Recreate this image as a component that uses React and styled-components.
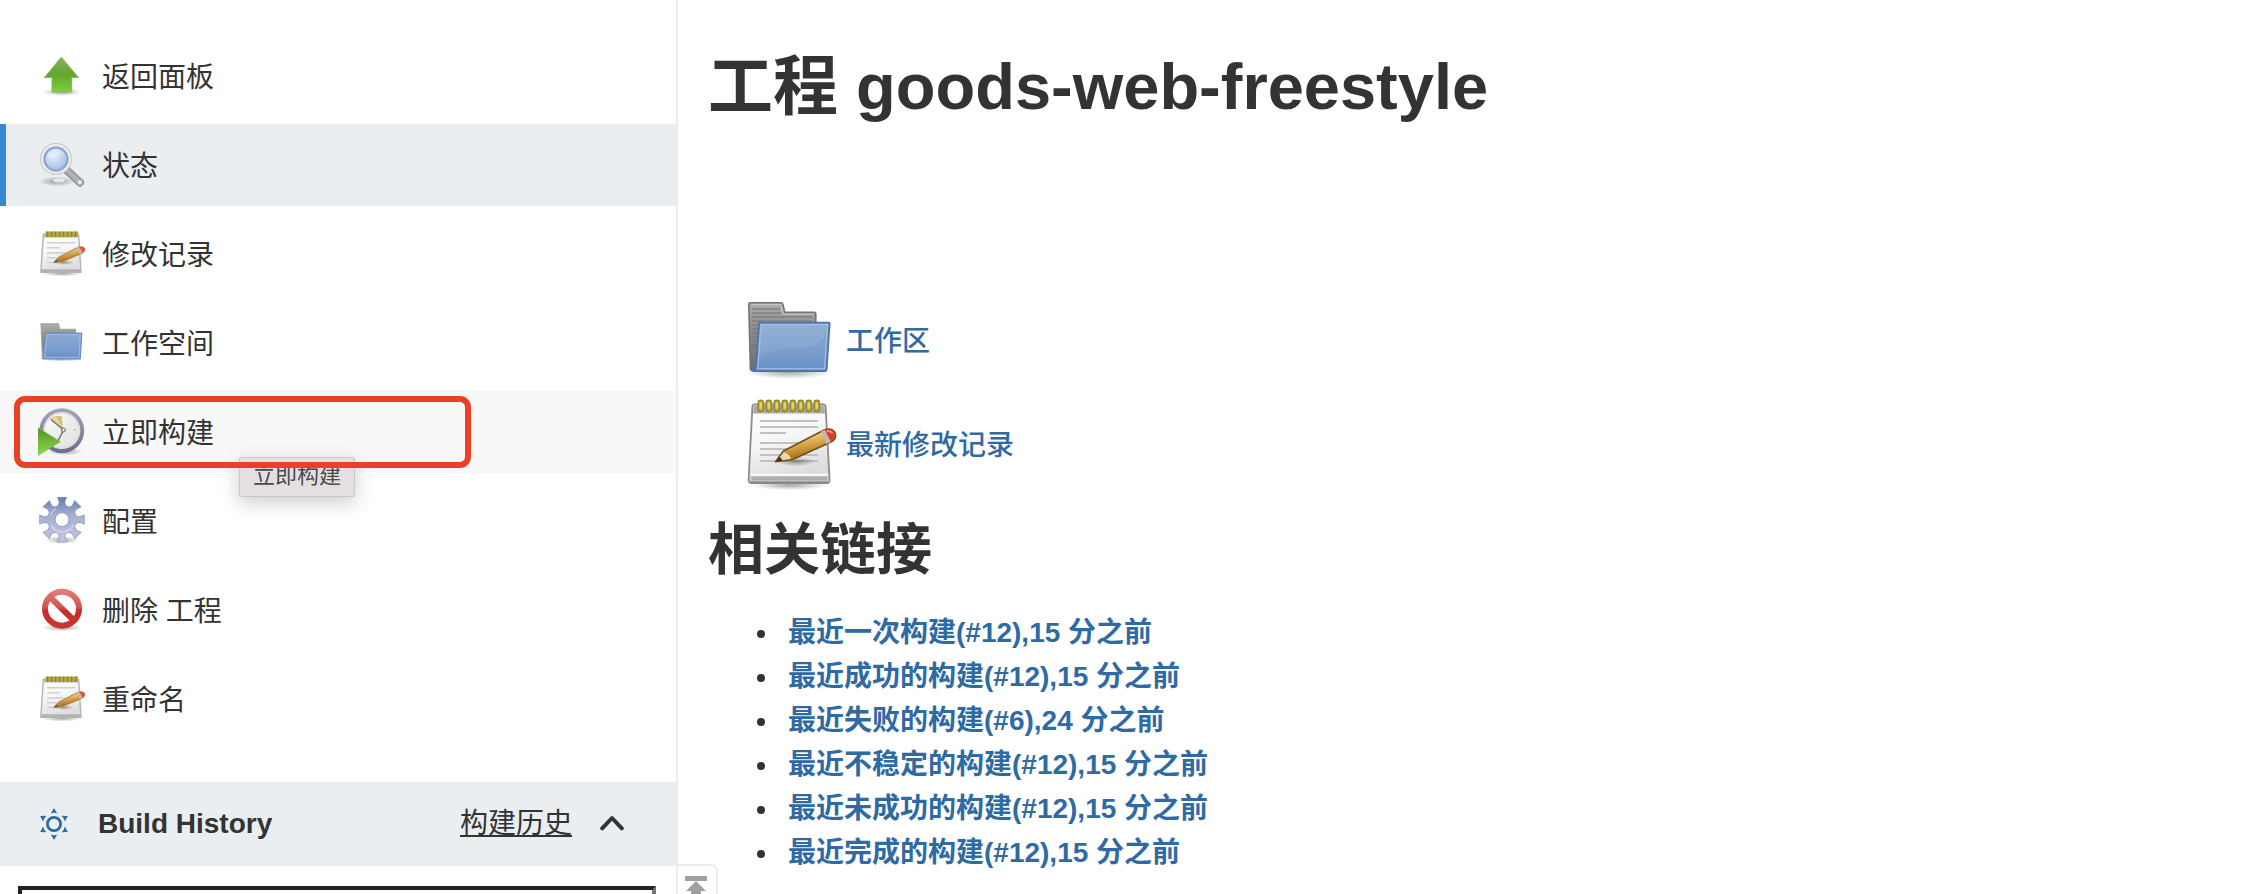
import React from "react";
import styled, { createGlobalStyle, css } from "styled-components";

const colors = {
  text: "#333333",
  link: "#2f6aa3",
  band: "#eaeef1",
  hover: "#f8f8f8",
  accent: "#3b86d3",
  marker: "#eb4025",
};

const GlobalStyle = createGlobalStyle`
  *, *::before, *::after { box-sizing: border-box; }
  body {
    margin: 0;
    background: #ffffff;
    color: ${colors.text};
    font-family: "Liberation Sans", "Noto Sans CJK SC", sans-serif;
    font-size: 28px;
    line-height: 44px;
  }
`;

const Shell = styled.div`
  display: flex;
  height: 100vh;
  overflow: hidden;
`;

const Sidebar = styled.aside`
  flex: none;
  width: 30%;
  display: flex;
  flex-direction: column;
  padding-top: 35px;
  border-right: 2px solid ${colors.band};
`;

const TaskList = styled.nav`
  display: flex;
  flex-direction: column;
  gap: 7px;
  margin-bottom: 42px;
`;

const TaskItem = styled.div`
  position: relative;
`;

const TaskLink = styled.a`
  display: flex;
  align-items: center;
  gap: 16px;
  height: 82px;
  padding-left: 38px;
  color: inherit;
  text-decoration: none;
  ${(p) => p.$state === "active" && css`
    background: ${colors.band};
    box-shadow: inset 6px 0 0 ${colors.accent};
  `}
  ${(p) => p.$state === "hover" && css`
    background: ${colors.hover};
  `}
`;

const Label = styled.span`
  padding-top: 3px;
`;

const Marker = styled.span`
  position: absolute;
  z-index: 2;
  top: 5px;
  left: 14px;
  width: 457px;
  height: 72px;
  border: 6px solid ${colors.marker};
  border-radius: 11px;
  pointer-events: none;
`;

const Tooltip = styled.span`
  position: absolute;
  z-index: 1;
  top: 66px;
  left: 239px;
  height: 40px;
  padding: 0 13px;
  border: 1px solid #cbc8ca;
  border-radius: 2px;
  background: #e4e0e2;
  box-shadow: 0 6px 20px rgba(0, 0, 0, 0.2);
  color: #4a4a4a;
  font-size: 22px;
  line-height: 36px;
`;

const HistoryBar = styled.section`
  display: flex;
  align-items: center;
  flex: none;
  height: 84px;
  padding: 0 52px 0 38px;
  background: ${colors.band};
`;

const HistoryTitle = styled.h2`
  margin: 0 auto 0 28px;
  font-size: 28px;
  line-height: 44px;
`;

const TrendLink = styled.a`
  display: flex;
  align-items: center;
  gap: 28px;
  color: inherit;
  text-underline-offset: 2px;
  text-decoration-thickness: 2px;
`;

const Filter = styled.input`
  flex: none;
  height: 64px;
  margin: 20px 20px 0 18px;
  padding: 0 12px;
  border: 4px solid;
  border-color: #222222 #767676 #767676 #222222;
  background: #ffffff;
  font: inherit;
  outline: none;
`;

const PaneToggle = styled.button`
  flex: none;
  align-self: flex-end;
  display: flex;
  justify-content: center;
  width: 40px;
  height: 30px;
  padding: 10px 2px 0 0;
  overflow: hidden;
  border: 2px solid ${colors.band};
  border-width: 2px 2px 0 0;
  border-radius: 0 8px 0 0;
  background: #ffffff;
`;

const Main = styled.main`
  flex: 1;
  min-width: 0;
  margin-left: -10px;
  padding-top: 43px;
`;

const Title = styled.h1`
  margin: 0 0 161px;
  font-size: 65px;
  line-height: 88px;
`;

const Shortcuts = styled.div`
  display: flex;
  flex-direction: column;
  align-items: flex-start;
  gap: 8px;
  padding-left: 34px;
`;

const Shortcut = styled.a`
  display: flex;
  align-items: center;
  gap: 8px;
  color: ${colors.link};
  font-weight: 500;
  text-decoration: none;
`;

const Subtitle = styled.h2`
  margin: 20px 0 23px;
  font-size: 56px;
  line-height: 76px;
`;

const BuildList = styled.ul`
  margin: 0;
  padding-left: 72px;
`;

const BuildItem = styled.li`
  padding-left: 8px;
`;

const BuildLink = styled.a`
  color: ${colors.link};
  font-weight: 700;
  text-decoration: none;
`;

const Icon = styled.svg`
  flex: none;
  display: block;
  width: ${(p) => p.$size || 48}px;
  height: ${(p) => p.$size || 48}px;
`;

function ArrowIcon() {
  return (
    <Icon viewBox="0 0 48 48" aria-hidden="true">
      <defs>
        <linearGradient id="arrowFill" x1="0" y1="0" x2="0" y2="1">
          <stop offset="0" stopColor="#82b45d" />
          <stop offset="0.5" stopColor="#62a52e" />
          <stop offset="1" stopColor="#7fd03a" />
        </linearGradient>
        <radialGradient id="softShadow">
          <stop offset="0" stopColor="#000" stopOpacity="0.35" />
          <stop offset="1" stopColor="#000" stopOpacity="0" />
        </radialGradient>
      </defs>
      <ellipse cx="24" cy="40" rx="19" ry="4" fill="url(#softShadow)" />
      <path d="M23.3 5.2 40.5 25.5H33.7V40H14V25.5H6.4Z" fill="url(#arrowFill)" stroke="#86b566" strokeWidth="1" strokeLinejoin="round" />
    </Icon>
  );
}

function SearchIcon() {
  return (
    <Icon viewBox="0 0 48 48" aria-hidden="true">
      <defs>
        <radialGradient id="lensFill" cx="0.4" cy="0.35" r="0.7">
          <stop offset="0" stopColor="#e0ecf8" />
          <stop offset="0.6" stopColor="#bcd2ed" />
          <stop offset="1" stopColor="#9dbce4" />
        </radialGradient>
        <linearGradient id="handleFill" x1="1" y1="0" x2="0" y2="1">
          <stop offset="0" stopColor="#858585" />
          <stop offset="0.5" stopColor="#b5b5b5" />
          <stop offset="1" stopColor="#969696" />
        </linearGradient>
      </defs>
      <ellipse cx="19" cy="40.5" rx="18" ry="5" fill="url(#softShadow)" />
      <ellipse cx="21" cy="39.5" rx="6" ry="2" fill="#fff" opacity="0.7" />
      <path d="M29 29.5 42 41.5" stroke="#979797" strokeWidth="8" strokeLinecap="round" />
      <path d="M30 30 41.5 41" stroke="url(#handleFill)" strokeWidth="5" strokeLinecap="round" />
      <circle cx="41.8" cy="41.3" r="2.4" fill="#eee" stroke="#b5b5b5" strokeWidth="0.8" />
      <circle cx="18" cy="18" r="13.8" fill="none" stroke="#c5c7c5" strokeWidth="4.4" />
      <circle cx="18" cy="18" r="13.8" fill="none" stroke="#ededeb" strokeWidth="2.4" />
      <circle cx="18" cy="18" r="11.5" fill="url(#lensFill)" stroke="#88a6d3" strokeWidth="2" />
      <path d="M9 17a9 9 0 0 1 17-4c-5 0-9 5-17 4Z" fill="#fff" opacity="0.3" />
    </Icon>
  );
}

function NotepadDefs() {
  return (
    <defs>
      <linearGradient id="paperFill" x1="0" y1="0" x2="0.3" y2="1">
        <stop offset="0" stopColor="#ffffff" />
        <stop offset="0.5" stopColor="#f6f6f6" />
        <stop offset="1" stopColor="#dddddd" />
      </linearGradient>
      <linearGradient id="pencilFill" x1="0.4" y1="0.2" x2="0.6" y2="0.8">
        <stop offset="0" stopColor="#efcf93" />
        <stop offset="0.45" stopColor="#d9a44a" />
        <stop offset="1" stopColor="#a8721c" />
      </linearGradient>
    </defs>
  );
}

function SmallNotepadIcon() {
  return (
    <Icon viewBox="0 0 48 48" aria-hidden="true">
      <NotepadDefs />
      <ellipse cx="24" cy="43.5" rx="20" ry="3" fill="url(#softShadow)" />
      <path d="M5.4 4.2H40.6L43 42.3H2.8Z" fill="url(#paperFill)" stroke="#b4b4b2" strokeWidth="1.4" strokeLinejoin="round" />
      <path d="M5.6 4.8H40.4L40.6 7.6H5.4Z" fill="#bdbdb8" />
      <path d="M3.6 40.6H42.2" stroke="#b2b2b0" strokeWidth="2.6" />
      <path d="M7.5 4.2H40" stroke="#b3a54a" strokeWidth="5.6" />
      <path d="M9 4.2H40" stroke="#8c8136" strokeWidth="5.6" strokeDasharray="1.2 2.8" />
      <path d="M9 12.8H37.5M9 17.8H21.5M9 23H34M9 27.8H18M9 32.5H16" stroke="#cfcfcf" strokeWidth="1.4" />
      <ellipse cx="26" cy="32.5" rx="10" ry="2.5" fill="url(#softShadow)" />
      <path d="M15.8 32.6 20 27.5 39.6 17.4Q44 15.4 46.8 18.6 47.6 21.4 44.5 23L24.5 31.6Z" fill="url(#pencilFill)" stroke="#a37a3d" strokeWidth="0.9" strokeLinejoin="round" />
      <path d="M15.8 32.8 18.4 29.4 20.6 31.7Z" fill="#6d6046" />
      <path d="M38.8 17.8 41 16.8 44.3 22.8 41.8 24Z" fill="#c9b4a8" />
      <path d="M41.4 17Q45 15.6 46.8 18.6 47.2 21.2 44.4 22.8Z" fill="#e0574c" />
    </Icon>
  );
}

function LargeNotepadIcon() {
  const rings = [9.4, 13.4, 17.4, 21.4, 25.4, 29.4, 33.4, 37.4];
  const lines = [12.5, 15.5, 18.5, 23.5, 26.5, 29.5, 32.5];
  return (
    <Icon viewBox="0 0 48 48" $size={96} aria-hidden="true">
      <NotepadDefs />
      <ellipse cx="24" cy="44.5" rx="19" ry="2.6" fill="url(#softShadow)" />
      <path d="M6.4 4.2H40.6Q41.7 4.2 41.8 5.3L43.8 42Q43.8 43.5 42.5 43.5H4.6Q3.2 43.5 3.3 42L5.2 5.3Q5.3 4.2 6.4 4.2Z" fill="url(#paperFill)" stroke="#8c8d89" strokeWidth="0.9" />
      <path d="M5.8 4.7H41.2L41.5 8.7H5.6Z" fill="#aaaaa6" />
      <path d="M4.2 39.5H42.9L43.2 43H3.9Z" fill="#c6c6c4" />
      <path d="M4.3 39.4H42.9" stroke="#fff" strokeWidth="0.9" />
      <path d="M5 41.3H42.3" stroke="#adadab" strokeWidth="1.6" />
      <path d="M4 43.2H43.2" stroke="#858681" strokeWidth="0.8" />
      {rings.map((x) => (
        <g key={x}>
          <rect x={x - 1.3} y="2.2" width="2.6" height="5.5" rx="1.3" fill="#cfbf45" stroke="#958628" strokeWidth="0.8" />
          <path d={`M${x} 3.4V6`} stroke="#e6da78" strokeWidth="0.7" />
        </g>
      ))}
      {lines.map((y) => (
        <path key={y} d={`M9 ${y}H${y === 18.5 ? 22 : 38}`} stroke="#c1c1c1" strokeWidth="1" />
      ))}
      <ellipse cx="27" cy="32.8" rx="10" ry="2.5" fill="url(#softShadow)" />
      <path d="M16.8 32.9 20.7 27.5 41.3 16.9Q45 15.8 46.6 18.5 47.5 21.5 44.5 23L25 31.9Z" fill="url(#pencilFill)" stroke="#76501c" strokeWidth="0.8" strokeLinejoin="round" />
      <path d="M17.2 32.6 21 28Q23.8 29 24.5 31.4Z" fill="#ead6a6" />
      <path d="M16.7 33 18.7 30.3 20.4 32.3Z" fill="#3e3218" />
      <path d="M39.4 17.8 41.4 16.9 44.5 23 42.2 24Z" fill="#c5b4b1" />
      <path d="M41.4 17Q45 15.9 46.3 18.6 47 21.3 44.4 22.8Z" fill="#dc3c32" />
      <path d="M42.4 17.7Q44.4 17.2 45.2 18.7" stroke="#ff9a90" strokeWidth="0.9" fill="none" />
    </Icon>
  );
}

function FolderDefs() {
  return (
    <defs>
      <linearGradient id="folderBack" x1="0" y1="0" x2="0" y2="1">
        <stop offset="0" stopColor="#adadad" />
        <stop offset="0.35" stopColor="#8f8f8f" />
        <stop offset="1" stopColor="#6c6c6c" />
      </linearGradient>
      <linearGradient id="folderFront" x1="0" y1="0" x2="0" y2="1">
        <stop offset="0" stopColor="#8baad2" />
        <stop offset="0.6" stopColor="#7a9dce" />
        <stop offset="1" stopColor="#6690c8" />
      </linearGradient>
    </defs>
  );
}

function SmallFolderIcon() {
  return (
    <Icon viewBox="0 0 48 48" aria-hidden="true">
      <FolderDefs />
      <ellipse cx="24" cy="40" rx="21" ry="2.5" fill="url(#softShadow)" />
      <path d="M3 4.8H20.5L21.5 10.3H37.5V39.5H4.5Z" fill="url(#folderBack)" stroke="#a4a4a4" strokeWidth="1.2" strokeLinejoin="round" />
      <path d="M8 14.2H43.6L42.2 39.8H5Z" fill="url(#folderFront)" stroke="#6d92c8" strokeWidth="1.4" strokeLinejoin="round" />
      <path d="M9 15.6H42.2L41 38.4H6.6Z" fill="none" stroke="#a3bde0" strokeWidth="0.9" />
    </Icon>
  );
}

function LargeFolderIcon() {
  return (
    <Icon viewBox="0 0 48 48" $size={96} aria-hidden="true">
      <FolderDefs />
      <ellipse cx="23.5" cy="40" rx="22" ry="3.5" fill="url(#softShadow)" />
      <path d="M4.2 5.4H19.4Q20.3 5.4 20.5 6.3L21.4 10.2H36Q36.9 10.2 36.9 11.1V39.3H5.3Q4.3 39.3 4.2 38.3L3.4 6.3Q3.3 5.4 4.2 5.4Z" fill="url(#folderBack)" stroke="#747474" strokeWidth="0.8" />
      <path d="M4.6 6.3H19.4L20.5 11.1H36" fill="none" stroke="#c4c4c4" strokeWidth="0.6" />
      <path d="M5 8.5H19M5 10.5H19.5M5 12.5H35M5 14.5H35M5 16.5H8M5 18.5H8M5 20.5H8M5 22.5H8M5 24.5H7M5 26.5H7" stroke="#757575" strokeWidth="0.6" />
      <path d="M9.2 15.3H43.2Q43.9 15.3 43.8 16L42.3 38.6Q42.2 39.5 41.3 39.5H5.2Q6.8 39 7 37.5L8.5 16Q8.5 15.3 9.2 15.3Z" fill="url(#folderFront)" stroke="#4a73b3" strokeWidth="0.9" />
      <path d="M9.5 16.4H42.7L41.3 38.4H7.8Z" fill="none" stroke="#a9c1e3" strokeWidth="0.7" strokeOpacity="0.8" />
      <path d="M9.5 17H42L41.8 21Q38 28 26 28.3 13 28.5 8.5 33Z" fill="#fff" opacity="0.08" />
    </Icon>
  );
}

function ClockIcon() {
  return (
    <Icon viewBox="0 0 48 48" aria-hidden="true">
      <defs>
        <linearGradient id="clockRim" x1="0" y1="0" x2="0" y2="1">
          <stop offset="0" stopColor="#a2a3ba" />
          <stop offset="1" stopColor="#716d8f" />
        </linearGradient>
        <linearGradient id="clockFace" x1="0" y1="0" x2="1" y2="1">
          <stop offset="0" stopColor="#ffffff" />
          <stop offset="1" stopColor="#dcddd9" />
        </linearGradient>
        <linearGradient id="playFill" x1="0" y1="0" x2="0" y2="1">
          <stop offset="0" stopColor="#4f9119" />
          <stop offset="0.5" stopColor="#72b83c" />
          <stop offset="1" stopColor="#8bd94a" />
        </linearGradient>
      </defs>
      <ellipse cx="27" cy="43.5" rx="18" ry="3.8" fill="url(#softShadow)" />
      <circle cx="23.8" cy="22.6" r="20.4" fill="url(#clockFace)" stroke="url(#clockRim)" strokeWidth="4" />
      <circle cx="23.8" cy="22.6" r="17.6" fill="none" stroke="#dcdce0" strokeWidth="1.6" />
      <path d="M11.5 11Q17 6.5 24 8.4L24.6 20.6Z" fill="#dcc074" />
      <path d="M11.5 11Q14.5 8.6 18 8L24 20Z" fill="#e8d69c" />
      <path d="M13 11.5 25.5 22 20 33" fill="none" stroke="#77787a" strokeWidth="1.6" />
      <circle cx="25.4" cy="22" r="2" fill="#dededa" stroke="#6a6a6a" strokeWidth="1" />
      <circle cx="37" cy="22" r="0.9" fill="#b5b5b5" />
      <path d="M0 19.8 22.5 33.7 0 47.6Z" fill="url(#playFill)" stroke="#7ab450" strokeWidth="0.6" />
    </Icon>
  );
}

function GearIcon() {
  const teeth = [0, 45, 90, 135, 180, 225, 270, 315];
  const tooth = "M18 10.5Q21.6 8.4 21.5 5L20 0.6H28L26.5 5Q26.4 8.4 30 10.5Z";
  return (
    <Icon viewBox="0 0 48 48" aria-hidden="true">
      <defs>
        <linearGradient id="gearFill" gradientUnits="userSpaceOnUse" x1="24" y1="0" x2="24" y2="46">
          <stop offset="0" stopColor="#657caa" />
          <stop offset="0.4" stopColor="#a6b1d1" />
          <stop offset="1" stopColor="#c9c3e4" />
        </linearGradient>
        <mask id="gearShape">
          <g fill="#fff">
            <circle cx="24" cy="22.6" r="14.2" />
            {teeth.map((a) => (
              <path key={a} d={tooth} transform={`rotate(${a} 24 22.6)`} />
            ))}
          </g>
          <circle cx="24" cy="22.6" r="6.6" fill="#000" />
        </mask>
      </defs>
      <ellipse cx="24" cy="43" rx="17" ry="4" fill="url(#softShadow)" />
      <g stroke="#8b96b8" strokeWidth="1.4">
        {teeth.map((a) => (
          <path key={a} d={tooth} fill="none" transform={`rotate(${a} 24 22.6)`} />
        ))}
      </g>
      <circle cx="24" cy="22.6" r="8" fill="#fff" />
      <rect width="48" height="48" fill="url(#gearFill)" mask="url(#gearShape)" />
      <circle cx="24" cy="22.6" r="7" fill="none" stroke="#99a2c2" strokeWidth="1" />
      <path d="M12.5 18A12.4 12.4 0 0 1 18 11.6M35.5 27.5A12.4 12.4 0 0 1 13 28" fill="none" stroke="#fff" strokeOpacity="0.3" strokeWidth="2" />
    </Icon>
  );
}

function StopIcon() {
  return (
    <Icon viewBox="0 0 48 48" aria-hidden="true">
      <defs>
        <linearGradient id="stopFill" gradientUnits="userSpaceOnUse" x1="24" y1="3" x2="24" y2="43">
          <stop offset="0" stopColor="#e2807b" />
          <stop offset="0.45" stopColor="#d5534d" />
          <stop offset="0.55" stopColor="#c72c27" />
          <stop offset="1" stopColor="#cf3731" />
        </linearGradient>
      </defs>
      <ellipse cx="24" cy="41.5" rx="20" ry="4" fill="url(#softShadow)" />
      <circle cx="24" cy="22.7" r="17" fill="#fff" stroke="url(#stopFill)" strokeWidth="6" />
      <path d="M11.5 10.5 36.5 35" stroke="url(#stopFill)" strokeWidth="6" />
    </Icon>
  );
}

function SunIcon() {
  return (
    <Icon viewBox="0 0 32 32" $size={32} aria-hidden="true">
      <circle cx="16" cy="16" r="6.6" fill="none" stroke={colors.link} strokeWidth="2.8" />
      {[0, 60, 120, 180, 240, 300].map((a) => (
        <path key={a} d="M16 0 19.3 5.4Q16 4.2 12.7 5.4Z" fill={colors.link} transform={`rotate(${a} 16 16)`} />
      ))}
    </Icon>
  );
}

function ChevronIcon() {
  return (
    <Icon viewBox="0 0 24 24" $size={24} aria-hidden="true">
      <path d="M2.2 16.4 12 6 21.8 16.4" fill="none" stroke={colors.text} strokeWidth="4" strokeLinejoin="round" strokeLinecap="round" />
    </Icon>
  );
}

function CollapseIcon() {
  return (
    <Icon viewBox="0 0 24 24" $size={24} aria-hidden="true">
      <path d="M1 0H23V5H1Z M12 5 22 15H17V24H7V15H2Z" fill="#a0a0a0" />
    </Icon>
  );
}

const tasks = [
  { label: "返回面板", Glyph: ArrowIcon },
  { label: "状态", Glyph: SearchIcon, state: "active" },
  { label: "修改记录", Glyph: SmallNotepadIcon },
  { label: "工作空间", Glyph: SmallFolderIcon },
  { label: "立即构建", Glyph: ClockIcon, state: "hover" },
  { label: "配置", Glyph: GearIcon },
  { label: "删除 工程", Glyph: StopIcon },
  { label: "重命名", Glyph: SmallNotepadIcon },
];

const shortcuts = [
  { label: "工作区", Glyph: LargeFolderIcon },
  { label: "最新修改记录", Glyph: LargeNotepadIcon },
];

const builds = [
  "最近一次构建(#12),15 分之前",
  "最近成功的构建(#12),15 分之前",
  "最近失败的构建(#6),24 分之前",
  "最近不稳定的构建(#12),15 分之前",
  "最近未成功的构建(#12),15 分之前",
  "最近完成的构建(#12),15 分之前",
];

export default function App() {
  return (
    <>
      <GlobalStyle />
      <Shell>
        <Sidebar>
          <TaskList>
            {tasks.map(({ label, Glyph, state }) => (
              <TaskItem key={label}>
                <TaskLink href="#" $state={state}>
                  <Glyph />
                  <Label>{label}</Label>
                </TaskLink>
                {state === "hover" && (
                  <>
                    <Tooltip role="tooltip">{label}</Tooltip>
                    <Marker />
                  </>
                )}
              </TaskItem>
            ))}
          </TaskList>
          <HistoryBar>
            <SunIcon />
            <HistoryTitle>Build History</HistoryTitle>
            <TrendLink href="#">
              构建历史
              <ChevronIcon />
            </TrendLink>
          </HistoryBar>
          <Filter type="text" aria-label="find" />
        </Sidebar>
        <PaneToggle type="button" aria-label="Back to top">
          <CollapseIcon />
        </PaneToggle>
        <Main>
          <Title>工程 goods-web-freestyle</Title>
          <Shortcuts>
            {shortcuts.map(({ label, Glyph }) => (
              <Shortcut href="#" key={label}>
                <Glyph />
                <Label>{label}</Label>
              </Shortcut>
            ))}
          </Shortcuts>
          <Subtitle>相关链接</Subtitle>
          <BuildList>
            {builds.map((text) => (
              <BuildItem key={text}>
                <BuildLink href="#">{text}</BuildLink>
              </BuildItem>
            ))}
          </BuildList>
        </Main>
      </Shell>
    </>
  );
}
